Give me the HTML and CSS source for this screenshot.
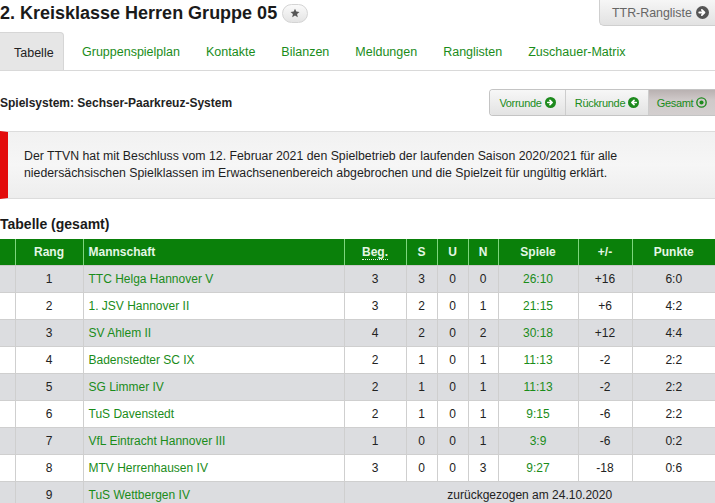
FILE: index.html
```html
<!DOCTYPE html>
<html lang="de">
<head>
<meta charset="utf-8">
<title>2. Kreisklasse Herren Gruppe 05</title>
<link rel="stylesheet" href="styles.css">
</head>
<body>
<div class="page">
  <header class="top">
    <div class="title-wrap">
      <h1 class="title">2. Kreisklasse Herren Gruppe 05</h1>
      <span class="star-btn">
        <svg width="10" height="10" viewBox="0 0 24 24"><path d="M12 1.5l3.1 7.1 7.7.7-5.8 5.1 1.7 7.6L12 18l-6.7 4 1.7-7.6-5.8-5.1 7.7-.7z" fill="#555"/></svg>
      </span>
    </div>
    <a class="ttr-btn">TTR-Rangliste
      <svg width="13" height="13" viewBox="0 0 16 16"><circle cx="8" cy="8" r="8" fill="#555"/><path d="M4 8h6M7.2 4.8L10.4 8 7.2 11.2" stroke="#fff" stroke-width="2.2" fill="none" stroke-linecap="round" stroke-linejoin="round"/></svg>
    </a>
  </header>

  <nav class="tabs">
    <span class="tab active">Tabelle</span>
    <span class="tab">Gruppenspielplan</span>
    <span class="tab">Kontakte</span>
    <span class="tab">Bilanzen</span>
    <span class="tab">Meldungen</span>
    <span class="tab">Ranglisten</span>
    <span class="tab">Zuschauer-Matrix</span>
  </nav>

  <div class="system-row">
    <span class="system">Spielsystem: Sechser-Paarkreuz-System</span>
    <div class="seg">
      <span class="seg-btn">Vorrunde
        <svg width="11" height="11" viewBox="0 0 16 16"><circle cx="8" cy="8" r="8" fill="#1d8a1d"/><path d="M4 8h6M7.2 4.8L10.4 8 7.2 11.2" stroke="#fff" stroke-width="2.4" fill="none" stroke-linecap="round" stroke-linejoin="round"/></svg>
      </span>
      <span class="seg-btn">Rückrunde
        <svg width="11" height="11" viewBox="0 0 16 16"><circle cx="8" cy="8" r="8" fill="#1d8a1d"/><path d="M12 8H6M8.8 4.8L5.6 8 8.8 11.2" stroke="#fff" stroke-width="2.4" fill="none" stroke-linecap="round" stroke-linejoin="round"/></svg>
      </span>
      <span class="seg-btn active">Gesamt
        <svg width="11" height="11" viewBox="0 0 16 16"><circle cx="8" cy="8" r="6.8" fill="none" stroke="#1d8a1d" stroke-width="2"/><circle cx="8" cy="8" r="3" fill="#1d8a1d"/></svg>
      </span>
    </div>
  </div>

  <div class="alert">
    <p>Der TTVN hat mit Beschluss vom 12. Februar 2021 den Spielbetrieb der laufenden Saison 2020/2021 für alle<br>niedersächsischen Spielklassen im Erwachsenenbereich abgebrochen und die Spielzeit für ungültig erklärt.</p>
  </div>

  <h2 class="table-title">Tabelle (gesamt)</h2>

  <table class="standings">
    <colgroup>
      <col class="c-pad"><col class="c-rang"><col class="c-team"><col class="c-beg"><col class="c-s"><col class="c-u"><col class="c-n"><col class="c-sp"><col class="c-diff"><col class="c-pkt">
    </colgroup>
    <thead>
      <tr>
        <th></th><th>Rang</th><th class="left">Mannschaft</th><th><abbr>Beg.</abbr></th><th>S</th><th>U</th><th>N</th><th>Spiele</th><th>+/-</th><th>Punkte</th>
      </tr>
    </thead>
    <tbody>
      <tr><td></td><td>1</td><td class="team">TTC Helga Hannover V</td><td>3</td><td>3</td><td>0</td><td>0</td><td class="games">26:10</td><td>+16</td><td>6:0</td></tr>
      <tr><td></td><td>2</td><td class="team">1. JSV Hannover II</td><td>3</td><td>2</td><td>0</td><td>1</td><td class="games">21:15</td><td>+6</td><td>4:2</td></tr>
      <tr><td></td><td>3</td><td class="team">SV Ahlem II</td><td>4</td><td>2</td><td>0</td><td>2</td><td class="games">30:18</td><td>+12</td><td>4:4</td></tr>
      <tr><td></td><td>4</td><td class="team">Badenstedter SC IX</td><td>2</td><td>1</td><td>0</td><td>1</td><td class="games">11:13</td><td>-2</td><td>2:2</td></tr>
      <tr><td></td><td>5</td><td class="team">SG Limmer IV</td><td>2</td><td>1</td><td>0</td><td>1</td><td class="games">11:13</td><td>-2</td><td>2:2</td></tr>
      <tr><td></td><td>6</td><td class="team">TuS Davenstedt</td><td>2</td><td>1</td><td>0</td><td>1</td><td class="games">9:15</td><td>-6</td><td>2:2</td></tr>
      <tr><td></td><td>7</td><td class="team">VfL Eintracht Hannover III</td><td>1</td><td>0</td><td>0</td><td>1</td><td class="games">3:9</td><td>-6</td><td>0:2</td></tr>
      <tr><td></td><td>8</td><td class="team">MTV Herrenhausen IV</td><td>3</td><td>0</td><td>0</td><td>3</td><td class="games">9:27</td><td>-18</td><td>0:6</td></tr>
      <tr><td></td><td>9</td><td class="team">TuS Wettbergen IV</td><td colspan="7">zurückgezogen am 24.10.2020</td></tr>
    </tbody>
  </table>
</div>
</body>
</html>
```

FILE: styles.css
```css
* { box-sizing: border-box; }
html, body { margin: 0; padding: 0; background: #fff; }
body {
  font-family: "Liberation Sans", Arial, sans-serif;
  font-size: 12px;
  color: #222;
  overflow: hidden;
}
.page { width: 715px; }

.top {
  display: flex;
  justify-content: space-between;
  align-items: flex-start;
  height: 32px;
}
.title-wrap {
  display: flex;
  align-items: center;
  gap: 5px;
  padding-top: 2px;
}
.title {
  margin: 0;
  font-size: 18px;
  font-weight: bold;
  color: #1a1a1a;
  line-height: 22px;
}
.star-btn {
  width: 26px;
  height: 19px;
  border-radius: 10px;
  border: 1px solid #d4d4d4;
  background: linear-gradient(#fafafa, #e4e4e4);
  display: flex;
  align-items: center;
  justify-content: center;
}
.ttr-btn {
  display: flex;
  align-items: center;
  gap: 4px;
  height: 26px;
  padding: 0 6px 0 12px;
  width: 116px;
  white-space: nowrap;
  font-size: 12.4px;
  color: #666;
  background: linear-gradient(#f6f6f6, #e2e2e2);
  border: 1px solid #cfcfcf;
  border-top: 0;
  border-right: 0;
  border-radius: 0 0 0 5px;
}

.tabs {
  display: flex;
  height: 39px;
  border-bottom: 1px solid #d9d9d9;
  gap: 2px;
}
.tab {
  display: flex;
  align-items: center;
  padding: 2px 12px 0 12px;
  color: #1a8c1a;
  font-size: 12.5px;
  white-space: nowrap;
}
.tab.active {
  color: #222;
  background: #e6e6e6;
  border: 1px solid #d6d6d6;
  border-bottom: 0;
  border-left: 0;
  border-radius: 0 4px 0 0;
  padding: 2px 10px 0 14px;
  width: 64px;
  margin-right: 4px;
}

.system-row {
  display: flex;
  justify-content: space-between;
  align-items: center;
  margin-top: 18px;
  height: 27px;
}
.system {
  font-weight: bold;
  font-size: 12px;
  color: #222;
}
.seg {
  display: flex;
  height: 27px;
  border: 1px solid #c4c4c4;
  border-right: 0;
  border-radius: 4px 0 0 4px;
  overflow: hidden;
}
.seg-btn {
  display: flex;
  align-items: center;
  justify-content: center;
  gap: 3px;
  font-size: 11px;
  letter-spacing: -0.3px;
  color: #1a8c1a;
  background: linear-gradient(#f7f7f7, #e3e3e3);
  border-right: 1px solid #cdcdcd;
}
.seg-btn:nth-child(1) { width: 76px; }
.seg-btn:nth-child(2) { width: 83px; }
.seg-btn.active {
  width: 66px;
  border-right: 0;
  background: linear-gradient(#b9b1b1, #cfc9c9 40%, #d3cfcf);
}

.alert {
  margin-top: 15px;
  height: 68px;
  border-top: 1px solid #dcdcdc;
  border-bottom: 1px solid #dcdcdc;
  border-left: 8px solid #e30b0b;
  background: linear-gradient(#f1f1f1, #f6f6f6 50%, #ededed);
  display: flex;
  align-items: center;
  padding-left: 16px;
}
.alert p {
  margin: 0;
  font-size: 12.3px;
  line-height: 17px;
  color: #1e1e1e;
}

.table-title {
  margin: 15px 0 0 0;
  font-size: 14px;
  font-weight: bold;
  line-height: 20px;
  height: 25px;
  color: #1a1a1a;
}

.standings {
  width: 715px;
  border-collapse: collapse;
  table-layout: fixed;
}
.c-pad { width: 15px; }
.c-rang { width: 68px; }
.c-team { width: 261px; }
.c-beg { width: 62px; }
.c-s { width: 31px; }
.c-u { width: 31px; }
.c-n { width: 30px; }
.c-sp { width: 80px; }
.c-diff { width: 54px; }
.c-pkt { width: 83px; }

.standings th {
  background: #0a800a;
  color: #e4f7e4;
  font-weight: bold;
  font-size: 12px;
  height: 26px;
  padding: 0;
  text-align: center;
  border-left: 1px solid #7ed67e;
  border-bottom: 1px solid #c9c9c9;
}
.standings th:first-child { border-left: 0; }
.standings th.left { text-align: left; padding-left: 5px; }
.standings abbr {
  text-decoration: none;
  border-bottom: 1px dotted #e4f7e4;
}
.standings td {
  height: 27px;
  padding: 0;
  text-align: center;
  font-size: 12px;
  color: #222;
  border-left: 1px solid #cfcfcf;
  border-bottom: 1px solid #cfcfcf;
}
.standings td:first-child { border-left: 0; }
.standings tbody tr:nth-child(odd) td { background: #dcdde0; }
.standings tbody tr:nth-child(even) td { background: #fff; }
.standings td.team {
  text-align: left;
  padding-left: 5px;
  color: #1a8c1a;
}
.standings td.games { color: #1a8c1a; }
```
